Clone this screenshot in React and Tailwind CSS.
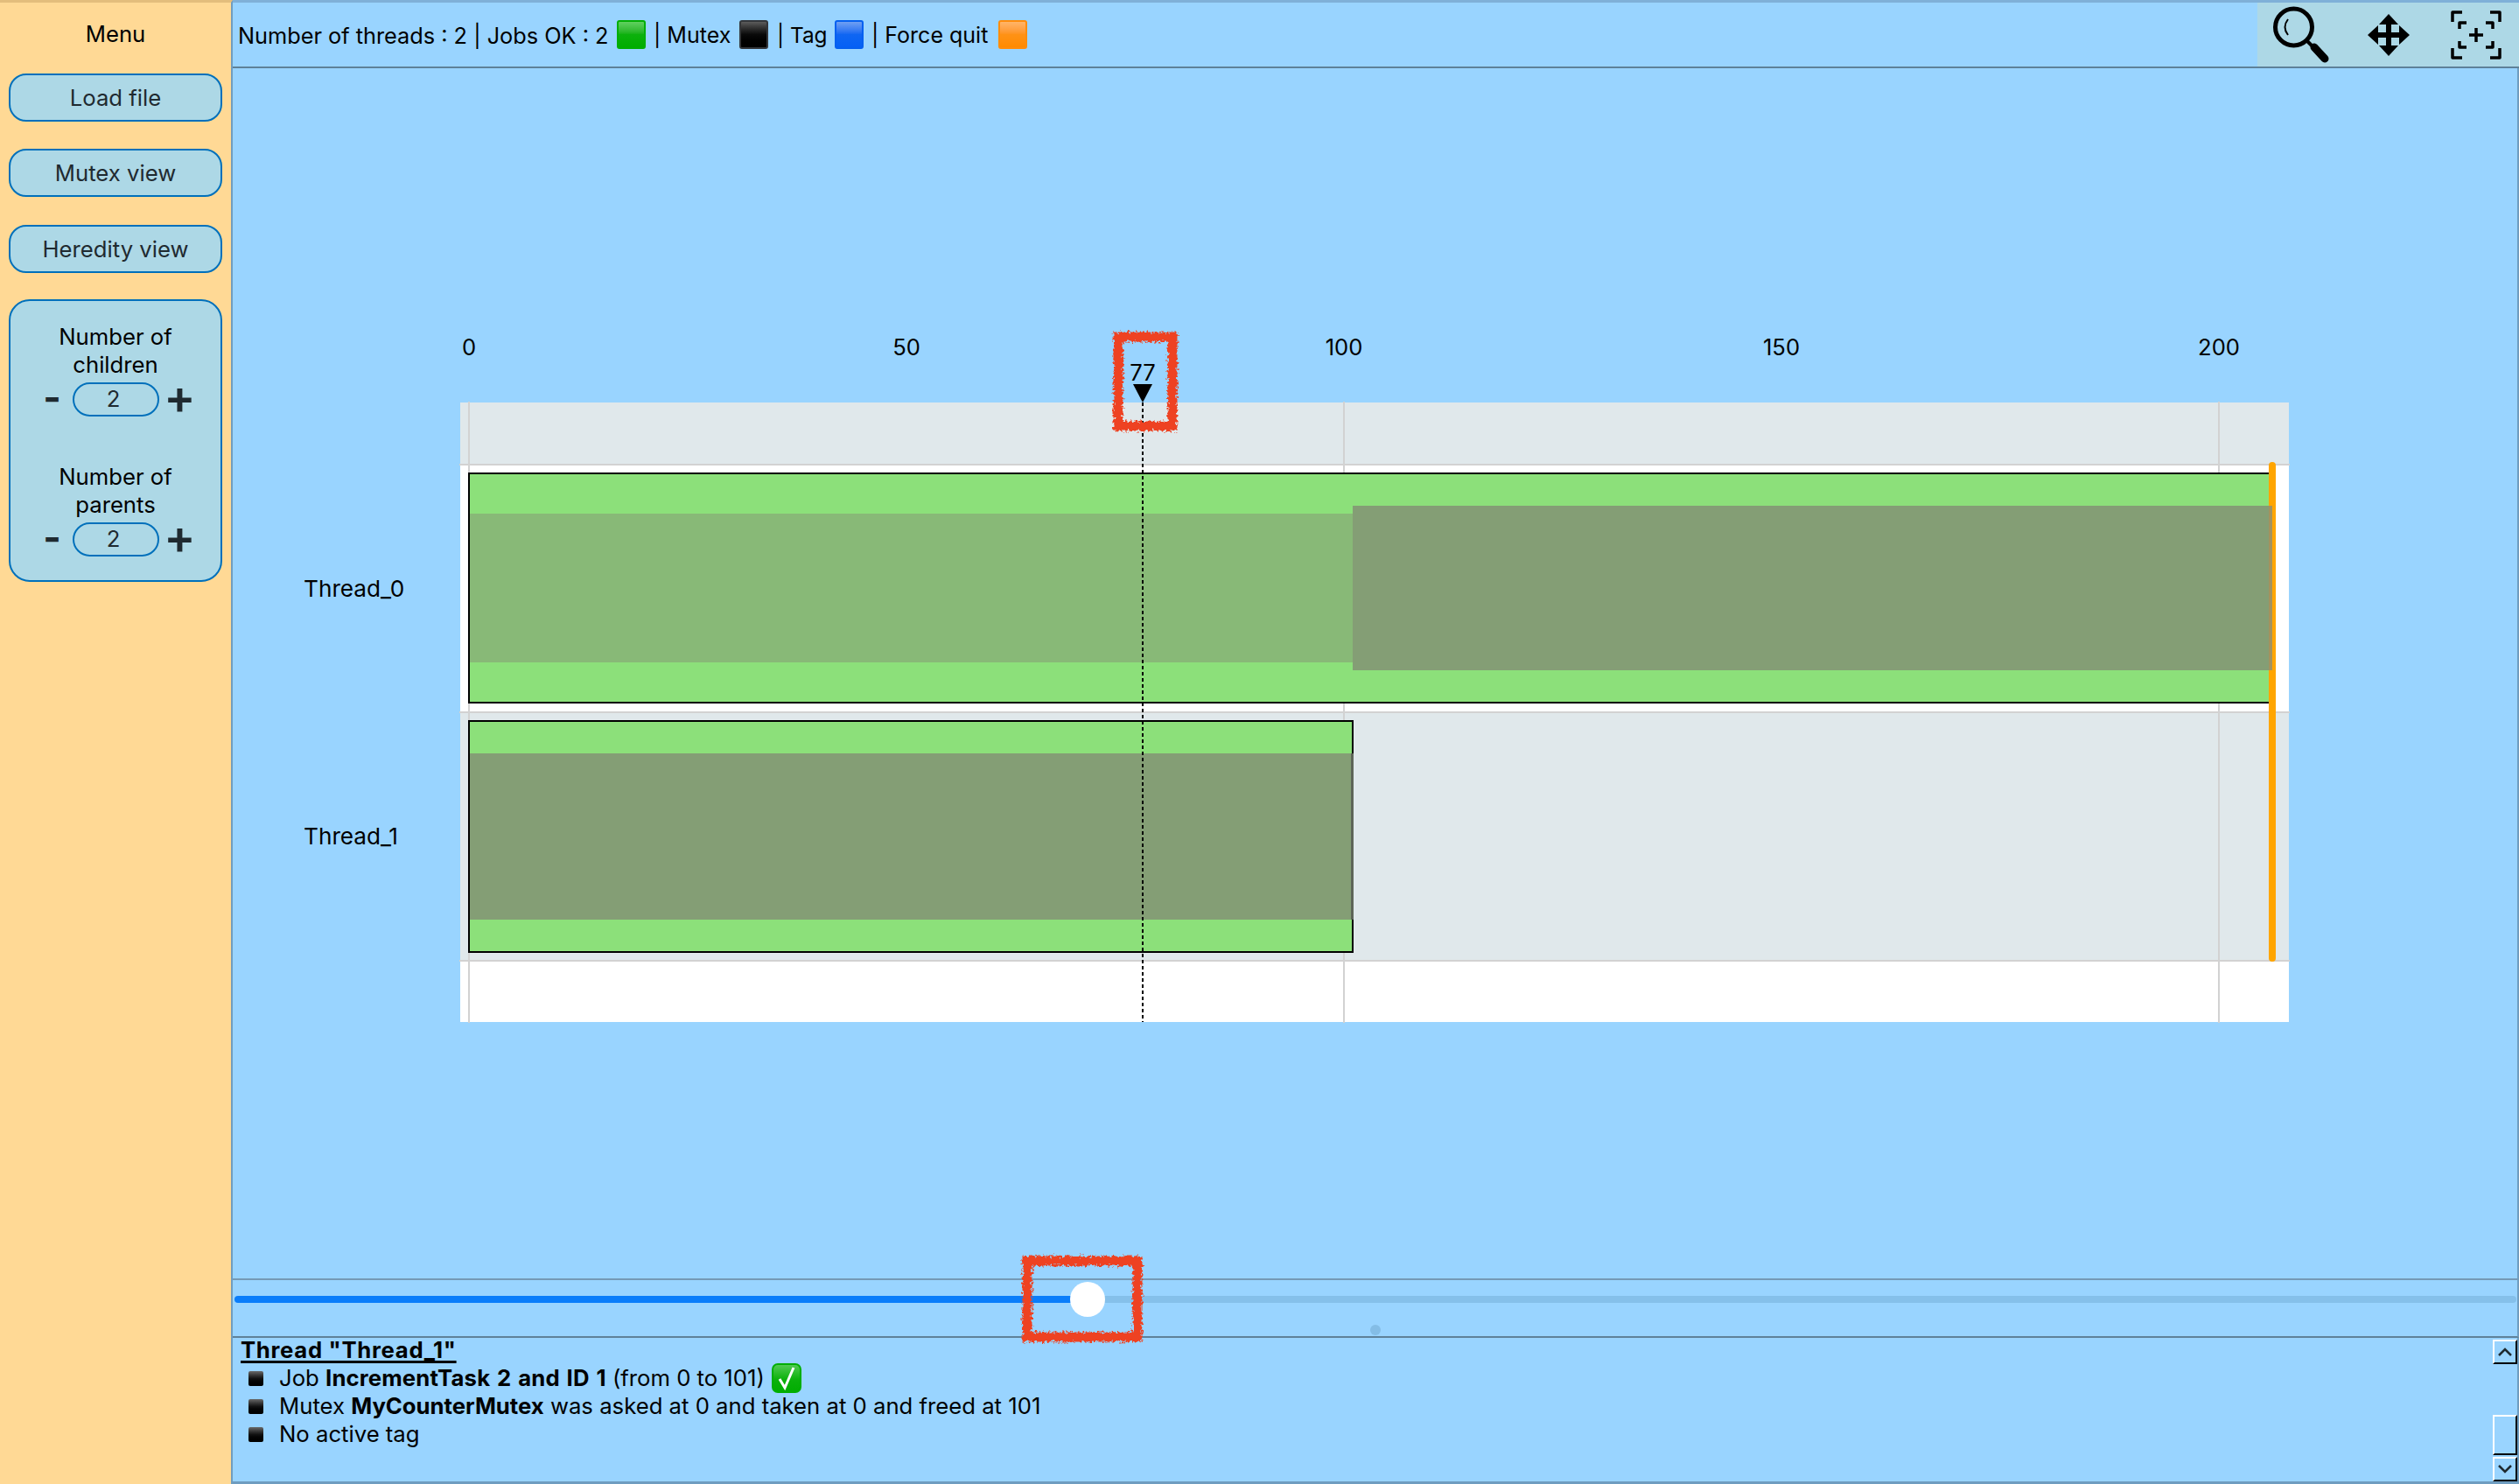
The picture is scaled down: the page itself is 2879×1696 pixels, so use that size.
const Emoji = ({ className }) => (
    <span className={`block w-[33px] h-[33px] shrink-0 rounded-[3px] border-2 bg-linear-to-b via-50% ${className}`} />
);

const Stepper = ({ label1, label2, value, className }) => (
    <div className={className}>
        <div className="text-center text-black leading-[32px]">{label1}<br />{label2}</div>
        <div className="flex items-center mt-[4px] pl-[39px] text-[#1f2a30]">
            <span className="w-[17px] h-[39px] flex items-center justify-center text-[44px] font-bold leading-none pb-[6px]">-</span>
            <span className="ml-[15px] w-[99px] h-[39px] rounded-[20px] border-2 border-[#0070bb] flex items-center justify-center pr-[6px]">{value}</span>
            <span className="ml-[10px] w-[27px] h-[39px] flex items-center justify-center text-[54px] font-semibold leading-none pb-[5px]">+</span>
        </div>
    </div>
);

const MenuButton = ({ children, className }) => (
    <button className={`w-[244px] h-[55px] pt-[2px] rounded-[20px] border-2 border-[#0070bb] bg-[#add8e6] text-[#1f2a30] ${className}`}>
        {children}
    </button>
);

const ToolIcon = ({ children }) => (
    <svg width="99" height="74" viewBox="0 0 99 74" className="block">{children}</svg>
);

const ScrollButton = ({ children, className = '' }) => (
    <div className={`w-[28px] border-t-2 border-l-2 border-t-white border-l-white border-b-2 border-r-2 border-b-black border-r-black flex items-center justify-center ${className}`}>
        {children}
    </div>
);

const GanttChart = () => (
    <svg width="2611" height="1383" viewBox="266 78 2611 1383" className="block">
        {/* rows */}
        <rect x="526" y="460" width="2090" height="71" fill="#e0e8eb" />
        <rect x="526" y="531" width="2090" height="283" fill="#ffffff" />
        <rect x="526" y="814" width="2090" height="284" fill="#e0e8eb" />
        <rect x="526" y="1098" width="2090" height="70" fill="#ffffff" />
        {/* grid */}
        {[536, 1536, 2536].map((x) => (
            <rect key={x} x={x - 1} y="459" width="2" height="710" fill="#d2d2d2" />
        ))}
        {[531, 814, 1098].map((y) => (
            <rect key={y} x="525" y={y - 1} width="2092" height="2" fill="#d2d2d2" />
        ))}
        {/* axis */}
        {[0, 50, 100, 150, 200].map((v) => (
            <text key={v} x={536 + v * 10} y="406" textAnchor="middle" fontSize="25.6" fill="#000">{v}</text>
        ))}
        <text x="347" y="682" fontSize="26.2" fill="#000">Thread_0</text>
        <text x="347" y="965" fontSize="26.2" fill="#000">Thread_1</text>
        {/* thread 0 */}
        <rect x="536" y="541" width="2061" height="262" fill="#8ce07a" stroke="#000" strokeWidth="2" />
        <rect x="537" y="587" width="1009" height="170" fill="#88b977" />
        <rect x="1546" y="578" width="1047" height="188" fill="#849e75" />
        {/* thread 1 */}
        <rect x="536" y="824" width="1010" height="264" fill="#8ce07a" stroke="#000" strokeWidth="2" />
        <rect x="537" y="861" width="1007" height="190" fill="#849e75" />
        <rect x="1544" y="861" width="3" height="190" fill="#5e6558" />
        {/* force quit */}
        <rect x="2593" y="528" width="8" height="571" rx="4" fill="#ffa500" />
        <rect x="2593" y="578" width="4" height="188" fill="#a3925e" />
        {/* time cursor */}
        <line x1="1306" y1="460" x2="1306" y2="1168" stroke="#000" strokeWidth="2" strokeDasharray="4 3" />
        <polygon points="1295,439 1317,439 1306,460" fill="#000" />
        <text x="1306" y="435" textAnchor="middle" fontSize="25.6" fill="#000">77</text>
    </svg>
);

const CheckEmoji = () => (
    <svg width="34" height="34" viewBox="0 0 34 34" className="inline-block align-middle ml-[8px] -mt-[4px]">
        <defs>
            <linearGradient id="checkBg" x1="0" y1="0" x2="0" y2="1">
                <stop offset="0" stopColor="#55cc55" />
                <stop offset="0.55" stopColor="#0cb10c" />
                <stop offset="1" stopColor="#00ad00" />
            </linearGradient>
        </defs>
        <rect x="1" y="1" width="32" height="32" rx="6" fill="url(#checkBg)" stroke="#02ae02" strokeWidth="2" />
        <path d="M9 18 L15 28 L25 5" fill="none" stroke="#fff" strokeWidth="3" />
    </svg>
);

const DetailRow = ({ children }) => (
    <div className="flex items-center h-[32px] whitespace-pre">
        <span className="block w-[17px] h-[17px] ml-[9px] mr-[18px] rounded-[2px] bg-linear-to-b from-[#6a6a6a] via-[#111111] to-[#000000]" />
        <span>{children}</span>
    </div>
);

const App = () => {
    return (
        <div className="relative flex w-[2879px] h-[1696px] overflow-hidden bg-[#99d4ff] text-[25.7px] text-black font-['Inter','Liberation_Sans',sans-serif]">
            {/* left menu */}
            <div className="w-[266px] shrink-0 h-full bg-[#ffd995] border-r-2 border-r-[#6f9dc0] border-t-[3px] border-t-[#e3bd7c] px-[10px] flex flex-col">
                <div className="h-[70px] mb-[11px] pt-[2px] flex items-center justify-center">Menu</div>
                <MenuButton>Load file</MenuButton>
                <MenuButton className="mt-[31px]">Mutex view</MenuButton>
                <MenuButton className="mt-[32px]">Heredity view</MenuButton>
                <div className="mt-[30px] w-[244px] h-[323px] rounded-[24px] border-2 border-[#0070bb] bg-[#add8e6] pt-[25px]">
                    <Stepper label1="Number of" label2="children" value="2" />
                    <Stepper label1="Number of" label2="parents" value="2" className="mt-[53px]" />
                </div>
            </div>

            <div className="flex-1 min-w-0 h-full flex flex-col">
                {/* header */}
                <div className="h-[78px] shrink-0 flex justify-between border-t-[3px] border-t-[#7fb0d8] border-b-2 border-b-[#5e8199]">
                    <div className="flex items-center pl-[6px] text-[25.3px] whitespace-nowrap">
                        <span className="w-[427px] shrink-0 pt-[2px]">Number of threads : 2 | Jobs OK : 2</span>
                        <Emoji className="ml-[6px] border-[#02ae02] from-[#5fd05f] via-[#0cb10c] to-[#00ad00]" />
                        <span className="ml-[9px] w-[89px] shrink-0 pt-[2px] text-[25px]">| Mutex</span>
                        <Emoji className="ml-[9px] border-[#33363a] from-[#5c5c5c] via-[#0a0a0a] to-[#000000]" />
                        <span className="ml-[10px] w-[56px] shrink-0 pt-[2px] text-[24.4px]">| Tag</span>
                        <Emoji className="ml-[10px] border-[#0560f0] from-[#6f9ff2] via-[#0f66f2] to-[#0560f5]" />
                        <span className="ml-[9px] w-[136px] shrink-0 pt-[2px] text-[25px]">| Force quit</span>
                        <Emoji className="ml-[9px] border-[#ff8c0a] from-[#ffb568] via-[#ff9215] to-[#ff8a00]" />
                    </div>
                    <div className="w-[299px] flex bg-[#add8e6]">
                        <ToolIcon>
                            <circle cx="41.5" cy="28" r="21" fill="none" stroke="#000" strokeWidth="5" />
                            <path d="M35 19 Q28 28 35 37" fill="none" stroke="#000" strokeWidth="2" />
                            <line x1="56" y1="43" x2="66" y2="53" stroke="#000" strokeWidth="4" />
                            <line x1="65" y1="51" x2="77" y2="64" stroke="#000" strokeWidth="9" strokeLinecap="round" />
                        </ToolIcon>
                        <ToolIcon>
                            <path d="M51 13 L62 25 L54 25 L54 34 L63 34 L63 26 L75 37 L63 48 L63 40 L54 40 L54 49 L62 49 L51 61 L40 49 L48 49 L48 40 L39 40 L39 48 L27 37 L39 26 L39 34 L48 34 L48 25 L40 25 Z" fill="#000" />
                        </ToolIcon>
                        <ToolIcon>
                            <g fill="none" stroke="#000" strokeWidth="3.5" strokeLinejoin="round">
                                <path d="M25 22 V11 H36" />
                                <path d="M33 30 V23 H41" />
                                <path d="M79 22 V11 H68" />
                                <path d="M71 30 V23 H63" />
                                <path d="M25 52 V63 H36" />
                                <path d="M33 44 V51 H41" />
                                <path d="M79 52 V63 H68" />
                                <path d="M71 44 V51 H63" />
                                <path d="M44 37 H60 M52 29 V45" />
                            </g>
                        </ToolIcon>
                    </div>
                </div>

                {/* chart */}
                <div className="flex-1 min-h-0 border-r-2 border-r-[#6f9dc0]">
                    <GanttChart />
                </div>

                {/* time slider */}
                <div className="relative h-[68px] shrink-0 border-t-2 border-t-[#7599b5] border-b-2 border-b-[#5e8199] border-r-2 border-r-[#6f9dc0] flex items-center pl-[2px] pr-px pb-[20px]">
                    <div className="w-[975px] h-[8px] rounded-l-[4px] bg-[#0a7dfa]" />
                    <div className="relative z-10 w-[40px] h-[40px] shrink-0 -ml-[20px] rounded-full bg-white" />
                    <div className="flex-1 h-[8px] -ml-[20px] rounded-r-[4px] bg-[#85c0ea]" />
                    <div className="absolute left-[1300px] bottom-[1px] w-[12px] h-[12px] rounded-full bg-[#84bde6]" />
                </div>

                {/* details */}
                <div className="h-[167px] shrink-0 flex border-b-[3px] border-b-[#6f9dc0] border-r-2 border-r-[#6f9dc0]">
                    <div className="flex-1 min-w-0 pl-[9px] pt-[1px]">
                        <div className="h-[29px] leading-[25px]"><span className="font-bold tracking-[0.7px] underline decoration-[3px] underline-offset-[3px]">Thread "Thread_1"</span></div>
                        <DetailRow>Job <b className="tracking-[0.15px] [word-spacing:1.6px]">IncrementTask 2 and ID 1</b> (from 0 to 101)<CheckEmoji /></DetailRow>
                        <DetailRow>Mutex <b>MyCounterMutex</b> was asked at 0 and taken at 0 and freed at 101</DetailRow>
                        <DetailRow>No active tag</DetailRow>
                    </div>
                    <div className="w-[28px] shrink-0 flex flex-col pt-[2px]">
                        <ScrollButton className="h-[28px]">
                            <svg width="18" height="12" viewBox="0 0 18 12"><path d="M2 10 L9 3 L16 10" fill="none" stroke="#1f2a30" strokeWidth="2.5" /></svg>
                        </ScrollButton>
                        <ScrollButton className="mt-auto h-[46px]" />
                        <ScrollButton className="mt-[2px] h-[28px]">
                            <svg width="18" height="12" viewBox="0 0 18 12"><path d="M2 2 L9 9 L16 2" fill="none" stroke="#1f2a30" strokeWidth="2.5" /></svg>
                        </ScrollButton>
                    </div>
                </div>
            </div>

            {/* red hand-drawn highlights */}
            <svg className="absolute inset-0 w-full h-full pointer-events-none" viewBox="0 0 2879 1696">
                <defs>
                    <filter id="rough" x="-10%" y="-10%" width="120%" height="120%">
                        <feTurbulence type="fractalNoise" baseFrequency="0.35" numOctaves="2" seed="4" />
                        <feDisplacementMap in="SourceGraphic" scale="9" xChannelSelector="R" yChannelSelector="G" />
                    </filter>
                </defs>
                <g fill="none" stroke="#ee4223" strokeWidth="11" filter="url(#rough)">
                    <rect x="1278" y="385" width="62" height="102" />
                    <rect x="1174" y="1441" width="126" height="87" />
                </g>
            </svg>
        </div>
    );
};

export default App;
